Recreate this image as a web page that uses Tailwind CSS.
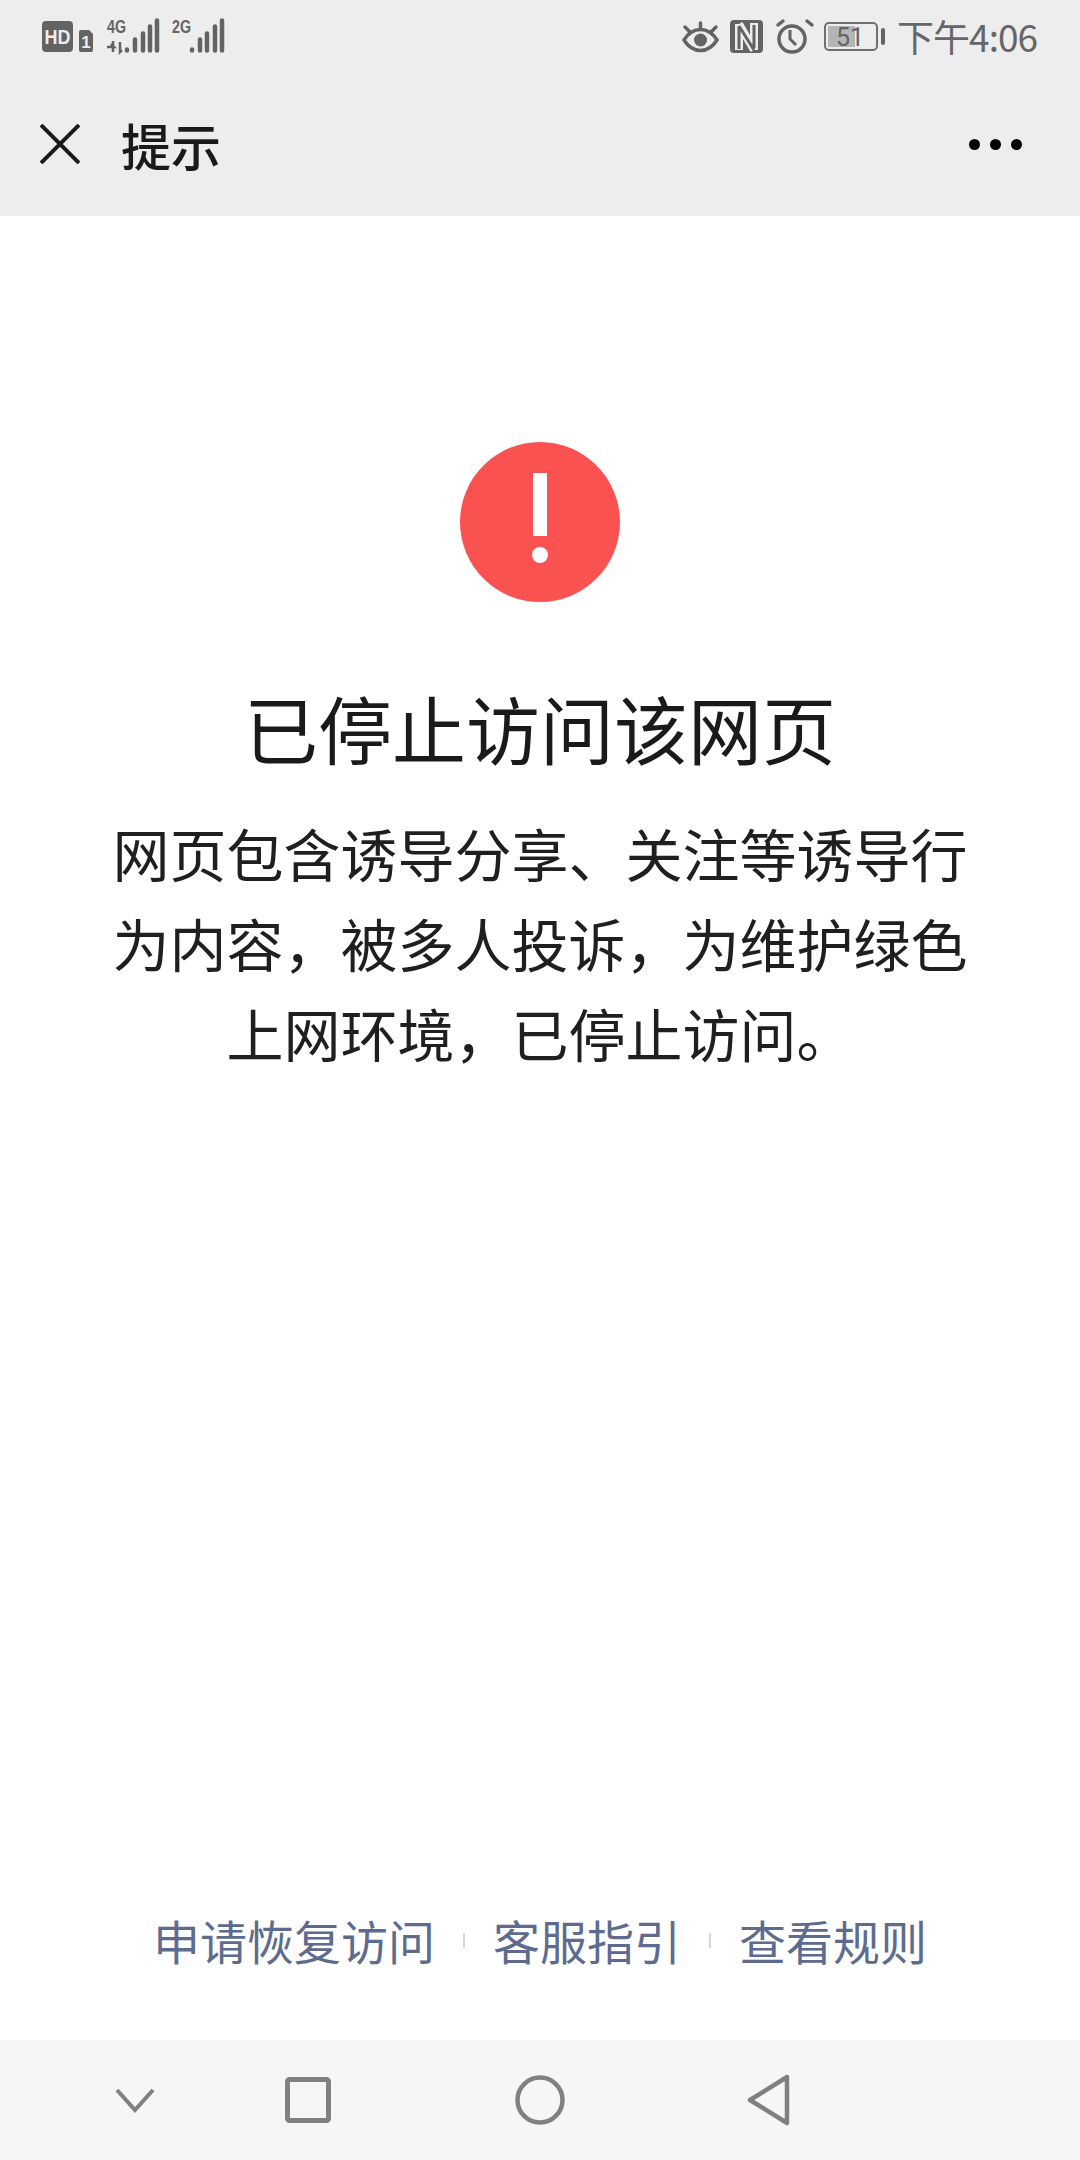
<!DOCTYPE html>
<html lang="zh-CN">
<head>
  <meta charset="UTF-8" />
  <title>提示</title>
  <script src="https://cdn.jsdelivr.net/npm/@tailwindcss/browser@4"></script>
</head>
<body class="bg-white font-['Noto_Sans_CJK_SC',sans-serif]">
  <div class="w-[1080px] h-[2160px] flex flex-col overflow-hidden">

    <!-- status bar + title bar -->
    <div class="h-[216px] shrink-0 bg-[#ededed] flex flex-col">
      <div class="h-[76px] flex items-center justify-between pl-[42px] pr-[43px]">
        <div class="flex items-center">
          <svg width="186" height="48" viewBox="0 -4 186 48" class="block">
            <rect x="0" y="3" width="31" height="31" rx="4" fill="#636363" />
            <text x="15.5" y="26" text-anchor="middle" font-family="Liberation Sans" font-weight="700" font-size="21" fill="#ededed" textLength="26" lengthAdjust="spacingAndGlyphs">HD</text>
            <path d="M39 12h8l4 4v16a2 2 0 0 1-2 2H39a2 2 0 0 1-2-2V14a2 2 0 0 1 2-2z" fill="#636363" />
            <text x="44" y="30" text-anchor="middle" font-family="Liberation Sans" font-weight="700" font-size="17" fill="#ededed">1</text>
            <text x="65" y="15" font-family="Liberation Sans" font-weight="700" font-size="19" fill="#636363" textLength="19" lengthAdjust="spacingAndGlyphs">4G</text>
            <path d="M65 29h7l-3-3M71 23v11M78 24v10l2-2" stroke="#636363" stroke-width="2.5" fill="none" />
            <text x="130" y="15" font-family="Liberation Sans" font-weight="700" font-size="19" fill="#636363" textLength="19" lengthAdjust="spacingAndGlyphs">2G</text>
            <g stroke="#636363" stroke-width="4.5" stroke-linecap="round">
              <path d="M85 32.500v-1M93 32.500v-11M101 32.500v-17M108 32.500v-24M115 32.500v-30" />
              <path d="M150 32.500v-1M158 32.500v-11M165 32.500v-17M173 32.500v-24M180 32.500v-30" />
            </g>
          </svg>
        </div>
        <div class="flex items-center">
          <svg width="204" height="40" viewBox="0 0 204 40" class="block">
            <path d="M2 22c5-8 11-10.500 16.500-10.500S30 14 35 22c-5 8-11 10.500-16.500 10.500S7 30 2 22z" fill="none" stroke="#636363" stroke-width="3.500" />
            <circle cx="18.500" cy="22" r="6.500" fill="#636363" />
            <path d="M18.500 5v6M3 9l5 5M34 9l-5 5" stroke="#636363" stroke-width="3.500" stroke-linecap="round" />
            <rect x="48" y="2" width="33" height="33" rx="4" fill="#636363" />
            <path d="M57 6v26M57 6l15 26M72 32V5" stroke="#ededed" stroke-width="8" fill="none" stroke-linejoin="round" />
            <path d="M57 8v23M57 8l15 24M72 30V7" stroke="#636363" stroke-width="3" fill="none" />
            <circle cx="110" cy="21" r="13" fill="none" stroke="#636363" stroke-width="3.500" />
            <path d="M108 12v9l6 6" fill="none" stroke="#636363" stroke-width="3" />
            <path d="M96 7l5-4M125 3l5 4" stroke="#636363" stroke-width="3.500" stroke-linecap="round" />
            <rect x="143" y="5" width="52" height="27" rx="4" fill="none" stroke="#707070" stroke-width="2" />
            <rect x="146" y="8" width="27" height="21" fill="#b5b5b5" />
            <text x="168" y="28" text-anchor="middle" font-family="Roboto" font-size="25" fill="#636363">51</text>
            <rect x="199" y="10" width="4" height="17" rx="2" fill="#636363" />
          </svg>
          <span class="ml-[11px] pb-[3px] text-[37px] leading-none tracking-[-1px] text-[#666666]">下午4:06</span>
        </div>
      </div>
      <div class="flex-1 flex items-center justify-between pl-[40px] pr-[58px] pb-[4px]">
        <div class="flex items-center">
          <svg width="40" height="40" viewBox="0 0 40 40" class="block">
            <path d="M1 1l38 38M39 1L1 39" stroke="#1a1a1a" stroke-width="4" fill="none" />
          </svg>
          <span class="ml-[41px] text-[50px] leading-none font-medium text-[#1a1a1a]">提示</span>
        </div>
        <div class="flex items-center gap-[10px]">
          <div class="w-[11px] h-[11px] rounded-full bg-black"></div>
          <div class="w-[11px] h-[11px] rounded-full bg-black"></div>
          <div class="w-[11px] h-[11px] rounded-full bg-black"></div>
        </div>
      </div>
    </div>

    <!-- message -->
    <div class="flex-1 flex flex-col items-center pt-[226px]">
      <svg width="160" height="160" viewBox="0 0 160 160" class="block">
        <circle cx="80" cy="80" r="80" fill="#fa5151" />
        <rect x="73" y="31" width="14" height="63" fill="#ffffff" />
        <circle cx="80" cy="113" r="8" fill="#ffffff" />
      </svg>
      <h1 class="mt-[75px] text-[74px] leading-[100px] font-normal text-[#1a1a1a] whitespace-nowrap">已停止访问该网页</h1>
      <p class="mt-[30px] w-[860px] text-center text-[57px] leading-[90px] text-[#1f1f1f]">网页包含诱导分享、关注等诱导行为内容，被多人投诉，为维护绿色上网环境，已停止访问。</p>
    </div>

    <!-- links -->
    <div class="h-[131px] shrink-0 flex items-start justify-center text-[47px] leading-[62px] text-[#5d6c8e]">
      <span>申请恢复访问</span>
      <span class="w-[2px] h-[15px] mt-[24px] mx-[28px] bg-[#d5d8df]"></span>
      <span>客服指引</span>
      <span class="w-[2px] h-[15px] mt-[24px] mx-[28px] bg-[#d5d8df]"></span>
      <span>查看规则</span>
    </div>

    <!-- nav bar -->
    <div class="h-[120px] shrink-0 bg-[#f6f6f6] flex items-center">
      <div class="w-[270px] flex justify-center">
        <svg width="40" height="28" viewBox="0 0 40 28" class="block"><path d="M2 4l18 20L38 4" fill="none" stroke="#808080" stroke-width="4" /></svg>
      </div>
      <div class="w-[15px]"></div>
      <svg width="46" height="46" viewBox="0 0 46 46" class="block"><rect x="2.500" y="2.500" width="41" height="41" rx="2" fill="none" stroke="#808080" stroke-width="5" /></svg>
      <div class="w-[184px]"></div>
      <svg width="50" height="50" viewBox="0 0 50 50" class="block"><circle cx="25" cy="25" r="22.500" fill="none" stroke="#808080" stroke-width="4.500" /></svg>
      <div class="w-[181px]"></div>
      <svg width="44" height="52" viewBox="0 0 44 52" class="block"><path d="M41 3L4 26l37 23z" fill="none" stroke="#808080" stroke-width="4.500" stroke-linejoin="round" /></svg>
    </div>
  </div>
</body>
</html>
